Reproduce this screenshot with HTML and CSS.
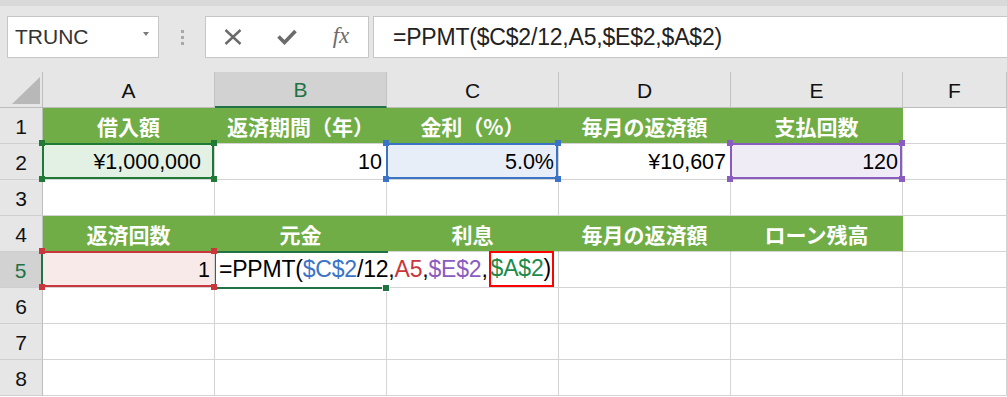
FILE: index.html
```html
<!DOCTYPE html>
<html lang="ja">
<head>
<meta charset="utf-8">
<title>PPMT</title>
<link rel="stylesheet" href="styles.css">
</head>
<body>
<div class="app">
  <div class="topstrip"></div>
  <div class="fbar">
    <div class="namebox"><span class="name">TRUNC</span><span class="dd"></span></div>
    <div class="grip"><i></i><i></i><i></i></div>
    <div class="btns">
      <span class="btn"><svg width="18" height="16" viewBox="0 0 18 16"><path d="M1.5 1 L16.5 15 M16.5 1 L1.5 15" stroke="#6b6b6b" stroke-width="2.4" fill="none"/></svg></span>
      <span class="btn"><svg width="20" height="16" viewBox="0 0 20 16"><path d="M1.5 7.5 L7.5 13.5 L18.5 2" stroke="#6b6b6b" stroke-width="3.6" fill="none"/></svg></span>
      <span class="btn fx">fx</span>
    </div>
    <div class="formula">=PPMT($C$2/12,A5,$E$2,$A$2)</div>
  </div>
  <div class="sheet">
    <div class="corner"><svg width="42" height="35" viewBox="0 0 42 35"><polygon points="40,5 40,32 12,32" fill="#b8b8b8"/></svg></div>
    <div class="ch">A</div>
    <div class="ch csel">B</div>
    <div class="ch">C</div>
    <div class="ch">D</div>
    <div class="ch">E</div>
    <div class="ch">F</div>

    <div class="rh">1</div>
    <div class="c hd">借入額</div>
    <div class="c hd">返済期間（年）</div>
    <div class="c hd">金利（%）</div>
    <div class="c hd">毎月の返済額</div>
    <div class="c hd">支払回数</div>
    <div class="c"></div>

    <div class="rh">2</div>
    <div class="c num hl g wide">¥1,000,000<span class="frame"></span><i class="h tl"></i><i class="h tr"></i><i class="h bl"></i><i class="h br"></i></div>
    <div class="c num">10</div>
    <div class="c num hl b">5.0%<span class="frame"></span><i class="h tl"></i><i class="h tr"></i><i class="h bl"></i><i class="h br"></i></div>
    <div class="c num">¥10,607</div>
    <div class="c num hl p">120<span class="frame"></span><i class="h tl"></i><i class="h tr"></i><i class="h bl"></i><i class="h br"></i></div>
    <div class="c"></div>

    <div class="rh">3</div>
    <div class="c"></div><div class="c"></div><div class="c"></div><div class="c"></div><div class="c"></div><div class="c"></div>

    <div class="rh">4</div>
    <div class="c hd">返済回数</div>
    <div class="c hd">元金</div>
    <div class="c hd">利息</div>
    <div class="c hd">毎月の返済額</div>
    <div class="c hd">ローン残高</div>
    <div class="c"></div>

    <div class="rh rsel">5</div>
    <div class="c num hl r">1<span class="frame"></span><i class="h tl"></i><i class="h tr"></i><i class="h bl"></i><i class="h br"></i></div>
    <div class="c active"><span class="ftext">=PPMT(<span class="rb">$C$2</span>/12,<span class="rr">A5</span>,<span class="rp">$E$2</span>,<span class="box"><span class="rg">$A$2</span>)</span></span><span class="aframe"></span><i class="fill"></i></div>
    <div class="c"></div><div class="c"></div><div class="c"></div><div class="c"></div>

    <div class="rh">6</div>
    <div class="c"></div><div class="c"></div><div class="c"></div><div class="c"></div><div class="c"></div><div class="c"></div>
    <div class="rh">7</div>
    <div class="c"></div><div class="c"></div><div class="c"></div><div class="c"></div><div class="c"></div><div class="c"></div>
    <div class="rh">8</div>
    <div class="c"></div><div class="c"></div><div class="c"></div><div class="c"></div><div class="c"></div><div class="c"></div>
  </div>
</div>
</body>
</html>
```
FILE: styles.css
```css
* { box-sizing: border-box; }
html, body { margin: 0; padding: 0; }
body {
  background: #ffffff;
  font-family: "Liberation Sans", Arial, sans-serif;
  width: 1007px;
  height: 397px;
  overflow: hidden;
}
.app { width: 1007px; }

.topstrip { height: 6px; background: #d9d9d9; }
.fbar {
  height: 66px;
  background: #e6e6e6;
  display: flex;
  align-items: flex-start;
  padding-top: 10px;
}
.namebox {
  margin-left: 7px;
  width: 152px;
  height: 42px;
  background: #fff;
  border: 1px solid #c6c6c6;
  display: flex;
  align-items: center;
  justify-content: space-between;
  padding: 0 9px 0 7px;
}
.name { font-size: 21px; color: #333; }
.dd {
  width: 0; height: 0;
  border-left: 3.5px solid transparent;
  border-right: 3.5px solid transparent;
  border-top: 4px solid #7a7a7a;
  margin-bottom: 6px;
}
.grip {
  width: 46px;
  height: 42px;
  display: flex;
  flex-direction: column;
  align-items: center;
  justify-content: center;
  gap: 3px;
}
.grip i { display: block; width: 3px; height: 3px; background: #a8a8a8; }
.btns {
  width: 164px;
  height: 42px;
  background: #fff;
  border: 1px solid #c6c6c6;
  display: flex;
}
.btn { flex: 1; display: flex; align-items: center; justify-content: center; }
.fx {
  font-family: "Liberation Serif", "Times New Roman", serif;
  font-style: italic;
  font-size: 23px;
  color: #6b6b6b;
  padding-bottom: 2px;
}
.formula {
  flex: 1;
  margin-left: 4px;
  height: 42px;
  background: #fff;
  border: 1px solid #c6c6c6;
  border-right: none;
  font-size: 23px;
  line-height: 40px;
  padding-left: 19px;
  color: #222;
  letter-spacing: -0.2px;
  white-space: nowrap;
}

.sheet {
  display: grid;
  grid-template-columns: 43px repeat(5, 172px) 1fr;
  grid-template-rows: repeat(9, 36px);
}
.corner {
  background: #e6e6e6;
  border-right: 1px solid #bdbdbd;
  border-bottom: 1px solid #bdbdbd;
}
.corner svg { display: block; }
.ch {
  background: #e6e6e6;
  border-right: 1px solid #c4c4c4;
  border-bottom: 1px solid #bdbdbd;
  display: flex;
  align-items: center;
  justify-content: center;
  font-size: 21px;
  color: #111;
  padding-top: 2px;
}
.ch.csel {
  background: #d2d2d2;
  color: #217346;
  border-bottom: 2px solid #217346;
}
.rh {
  background: #e6e6e6;
  border-right: 1px solid #bdbdbd;
  border-bottom: 1px solid #cfcfcf;
  display: flex;
  align-items: center;
  justify-content: center;
  font-size: 21px;
  color: #111;
  padding-top: 2px;
}
.rh.rsel {
  background: #d2d2d2;
  color: #217346;
  border-right: 2px solid #217346;
}

.c {
  border-right: 1px solid #d4d4d4;
  border-bottom: 1px solid #d4d4d4;
  font-size: 21.5px;
  color: #000;
  display: flex;
  align-items: center;
  white-space: nowrap;
}
.num { justify-content: flex-end; padding-right: 4px; padding-top: 1px; }
.num.wide { padding-right: 13px; }
.hd {
  background: #70ad47;
  border-right-color: #70ad47;
  color: #fff;
  font-family: "Noto Sans CJK JP", "Liberation Sans", sans-serif;
  font-weight: 700;
  font-size: 21px;
  justify-content: center;
}

/* reference highlights */
.hl { position: relative; z-index: 1; }
.hl .frame {
  position: absolute;
  top: -1px; left: -1px; right: 0; bottom: 0;
  border: 2px solid var(--hc);
}
.hl .h {
  position: absolute;
  width: 6px; height: 6px;
  background: var(--hc);
}
.h.tl { top: -4px; left: -4px; }
.h.tr { top: -4px; right: -3px; }
.h.bl { bottom: -3px; left: -4px; }
.h.br { bottom: -3px; right: -3px; }
.g { --hc: #1f7a36; background: #e3f0e4; }
.b { --hc: #3b74c6; background: #e8eef8; }
.p { --hc: #8a5cc0; background: #f0ecf6; }
.r { --hc: #c9373d; background: #f9eaea; z-index: 3; }
.r .frame { border-left-color: transparent; border-right-color: transparent; }

/* active cell with formula */
.active {
  position: relative;
  z-index: 2;
  border-right-color: transparent;
  overflow: visible;
  padding-left: 4px;
  align-items: stretch;
}
.ftext {
  font-size: 23px;
  letter-spacing: -0.2px;
  line-height: 34px;
  color: #000;
  white-space: nowrap;
}
.rb { color: #3b74c6; }
.rr { color: #c9373d; }
.rp { color: #8a5cc0; }
.rg { color: #1e8a4c; }
.box {
  display: inline-block;
  height: 36px;
  margin-top: -1px;
  margin-left: 1px;
  border: 2px solid #ff0000;
  line-height: 31px;
  padding: 0 1px 0 0;
  vertical-align: top;
}
.aframe {
  position: absolute;
  top: -1px; left: -2px; right: -2px; bottom: -2px;
  border-top: 2px solid #217346;
  border-bottom: 2px solid #217346;
  border-left: 3px solid #217346;
  pointer-events: none;
}
.fill {
  position: absolute;
  right: -4px; bottom: -5px;
  width: 8px; height: 8px;
  background: #217346;
  border: 1px solid #fff;
}
```
